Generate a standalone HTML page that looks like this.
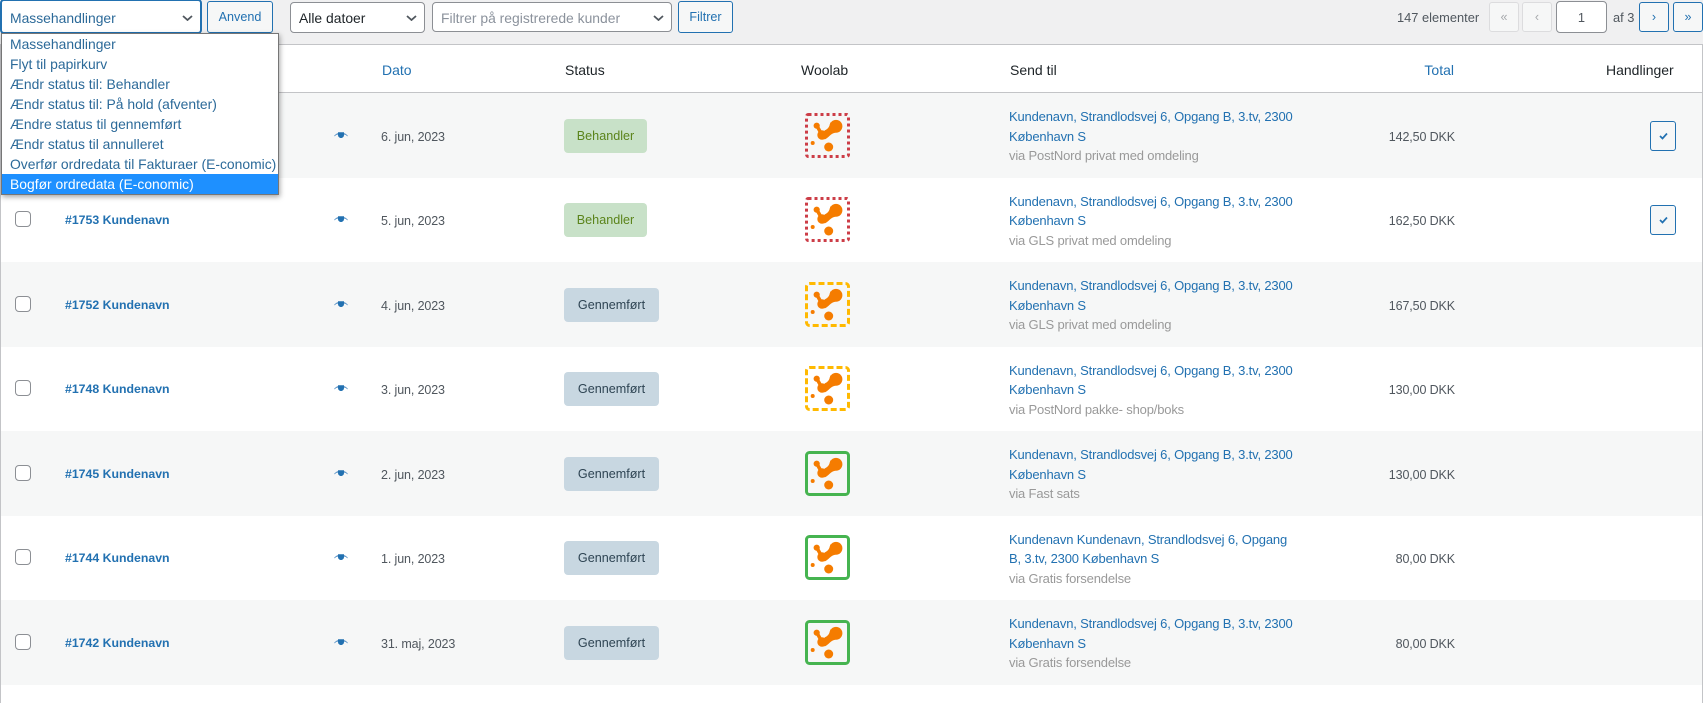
<!DOCTYPE html>
<html><head><meta charset="utf-8"><style>
html,body{margin:0;padding:0;width:1703px;height:703px;overflow:hidden;background:#f0f0f1}
body{position:relative;font-family:"Liberation Sans",sans-serif;font-size:12.5px;letter-spacing:-.12px;color:#50575e}
.t{position:absolute;white-space:nowrap;line-height:20px;height:20px;margin-top:1px}
.b{position:absolute;box-sizing:border-box}
.r{text-align:right}
.l{color:#2271b1}.v{color:#999}
.a{font-size:13px;letter-spacing:-.17px}
.o{color:#2271b1;font-weight:bold;font-size:12.3px;letter-spacing:0}
.h{color:#1d2327}.hd{font-size:14px;letter-spacing:0}
.f{font-size:13.9px;letter-spacing:0}
.n{font-size:12.85px;letter-spacing:0}
.btn{position:absolute;box-sizing:border-box;border:1px solid #2271b1;border-radius:3px;background:#f6f7f7;color:#2271b1;text-align:center;line-height:31px;font-size:12.6px;letter-spacing:0}
.sel{position:absolute;box-sizing:border-box;background:#fff;border:1px solid #8c8f94;border-radius:4px}
.cb{position:absolute;left:15px;width:16px;height:16px;box-sizing:border-box;border:1px solid #8c8f94;border-radius:4px;background:#fff}
.pill{position:absolute;left:564px;height:34px;box-sizing:border-box;border-radius:4px;text-align:center;line-height:34px;font-size:12.6px;letter-spacing:0}
.p1{width:83px;background:#c8e1c8;color:#5b841b}.p2{width:95px;background:#c8d7e1;color:#2e4453}
svg{position:absolute;display:block}
.dd{position:absolute;left:1px;top:33px;width:278px;height:162px;box-sizing:border-box;background:#fff;border:1px solid #767676;box-shadow:1px 2px 5px rgba(0,0,0,.35);z-index:5;font-size:13.9px;letter-spacing:0}
.dd div{position:absolute;left:0;right:0;height:20px;line-height:21px;padding-left:8px;color:#2c6a99;white-space:nowrap}
</style></head><body>
<svg width="0" height="0" style="position:absolute"><defs>
<symbol id="lg" viewBox="0 0 45 45">
<circle cx="31" cy="13.300" r="6.400" fill="#f57c00"/><circle cx="11.700" cy="12.700" r="3.100" fill="#f57c00"/><circle cx="17" cy="22" r="4.700" fill="#f57c00"/>
<circle cx="7.700" cy="30" r="2" fill="#f57c00"/><circle cx="23.700" cy="34" r="4.500" fill="#f57c00"/>
<path d="M25.500 9C24.500 13 24 15.500 19.500 17.500L19.500 26.500C24 24.500 25.500 20.500 30.500 19.600Z" fill="#f57c00"/><path d="M12 13L16.500 21" stroke="#f57c00" stroke-width="3.500"/>
</symbol>
<symbol id="eye" viewBox="0 0 14 6"><path d="M0 4C1.500 2 3 1.200 4.500 1V2.600C3 2.500 1.800 3 .7 4.300ZM14 4C12.500 2 11 1.200 9.500 1V2.600C11 2.500 12.200 3 13.300 4.300Z" fill="#5f96c8"/><path d="M4 .3H10V3C10 4.800 8.600 6 7 6S4 4.800 4 3Z" fill="#2271b1"/></symbol>
<symbol id="chk" viewBox="0 0 9 8"><path d="M1 4L3.500 6.500L8 1.500" fill="none" stroke="#2271b1" stroke-width="1.700"/></symbol>
<symbol id="chv" viewBox="0 0 11 6"><path d="M1 1L5.500 5L10 1" fill="none" stroke="#50575e" stroke-width="1.800"/></symbol>
</defs></svg>

<!-- toolbar -->
<div class="b" style="left:1px;top:0;width:200px;height:33px;background:#fff;border:1px solid #2271b1;box-shadow:0 0 0 1px #2271b1;border-radius:3px"></div>
<div class="t f" style="left:10px;top:7px;color:#2c6a99">Massehandlinger</div>
<svg style="left:182px;top:15px" width="11" height="6"><use href="#chv"/></svg>
<div class="btn" style="left:207px;top:1px;width:66px;height:32px">Anvend</div>
<div class="sel" style="left:290px;top:2px;width:135px;height:31px"></div>
<div class="t h f" style="left:299px;top:7px">Alle datoer</div>
<svg style="left:406px;top:15px" width="11" height="6"><use href="#chv"/></svg>
<div class="sel" style="left:432px;top:2px;width:240px;height:30px"></div>
<div class="t f" style="left:441px;top:7px;color:#8b929c">Filtrer på registrerede kunder</div>
<svg style="left:653px;top:15px" width="11" height="6"><use href="#chv"/></svg>
<div class="btn" style="left:678px;top:1px;width:55px;height:32px">Filtrer</div>
<div class="t n" style="left:1397px;top:7px">147 elementer</div>
<div class="btn" style="left:1489px;top:2px;width:30px;height:30px;line-height:29px;border-color:#dcdcde;color:#a7aaad">«</div>
<div class="btn" style="left:1522px;top:2px;width:30px;height:30px;line-height:29px;border-color:#dcdcde;color:#a7aaad">‹</div>
<div class="sel n" style="left:1556px;top:1px;width:51px;height:32px;text-align:center;line-height:31px">1</div>
<div class="t n" style="left:1613px;top:7px">af 3</div>
<div class="btn" style="left:1639px;top:2px;width:30px;height:30px;line-height:29px">›</div>
<div class="btn" style="left:1673px;top:2px;width:30px;height:30px;line-height:29px">»</div>

<!-- table -->
<div class="b" style="left:0;top:44px;width:1703px;height:659px;background:#fff;border:1px solid #c3c4c7;border-bottom:0"></div>
<div class="b" style="left:1px;top:92px;width:1701px;height:1px;background:#c3c4c7"></div>
<div class="b" style="left:1px;top:93px;width:1701px;height:85px;background:#f6f7f7"></div>
<div class="b" style="left:1px;top:262px;width:1701px;height:85px;background:#f6f7f7"></div>
<div class="b" style="left:1px;top:431px;width:1701px;height:85px;background:#f6f7f7"></div>
<div class="b" style="left:1px;top:600px;width:1701px;height:85px;background:#f6f7f7"></div>

<div class="t l hd" style="left:382px;top:59px">Dato</div>
<div class="t h hd" style="left:565px;top:59px">Status</div>
<div class="t h hd" style="left:801px;top:59px">Woolab</div>
<div class="t h hd" style="left:1010px;top:59px">Send til</div>
<div class="t l r hd" style="left:1355px;width:99px;top:59px">Total</div>
<div class="t h hd" style="left:1606px;top:59px">Handlinger</div>

<!-- row 1 -->
<div class="cb" style="top:127px"></div><div class="t o" style="left:65px;top:125px">#1754 Kundenavn</div>
<svg style="left:334px;top:132px" width="14" height="6"><use href="#eye"/></svg>
<div class="t" style="left:381px;top:126px">6. jun, 2023</div>
<div class="pill p1" style="top:119px">Behandler</div>
<svg style="left:805px;top:113px" width="45" height="45"><use href="#lg"/><rect x="1.500" y="1.500" width="42" height="42" rx="2" fill="none" stroke="#cc3d47" stroke-width="3" stroke-dasharray="3 3"/></svg>
<div class="t l a" style="left:1009px;top:106px">Kundenavn, Strandlodsvej 6, Opgang B, 3.tv, 2300</div>
<div class="t l a" style="left:1009px;top:126px">København S</div>
<div class="t v a" style="left:1009px;top:145px">via PostNord privat med omdeling</div>
<div class="t r" style="left:1355px;width:100px;top:126px">142,50 DKK</div>
<div class="btn" style="left:1650px;top:121px;width:26px;height:30px"></div><svg style="left:1659px;top:132px" width="9" height="8"><use href="#chk"/></svg>

<!-- row 2 -->
<div class="cb" style="top:211px"></div><div class="t o" style="left:65px;top:209px">#1753 Kundenavn</div>
<svg style="left:334px;top:216px" width="14" height="6"><use href="#eye"/></svg>
<div class="t" style="left:381px;top:210px">5. jun, 2023</div>
<div class="pill p1" style="top:203px">Behandler</div>
<svg style="left:805px;top:197px" width="45" height="45"><use href="#lg"/><rect x="1.500" y="1.500" width="42" height="42" rx="2" fill="none" stroke="#cc3d47" stroke-width="3" stroke-dasharray="3 3"/></svg>
<div class="t l a" style="left:1009px;top:191px">Kundenavn, Strandlodsvej 6, Opgang B, 3.tv, 2300</div>
<div class="t l a" style="left:1009px;top:210px">København S</div>
<div class="t v a" style="left:1009px;top:230px">via GLS privat med omdeling</div>
<div class="t r" style="left:1355px;width:100px;top:210px">162,50 DKK</div>
<div class="btn" style="left:1650px;top:205px;width:26px;height:30px"></div><svg style="left:1659px;top:216px" width="9" height="8"><use href="#chk"/></svg>

<!-- row 3 -->
<div class="cb" style="top:296px"></div><div class="t o" style="left:65px;top:294px">#1752 Kundenavn</div>
<svg style="left:334px;top:301px" width="14" height="6"><use href="#eye"/></svg>
<div class="t" style="left:381px;top:295px">4. jun, 2023</div>
<div class="pill p2" style="top:288px">Gennemført</div>
<svg style="left:805px;top:282px" width="45" height="45"><use href="#lg"/><rect x="1.500" y="1.500" width="42" height="42" rx="3" fill="none" stroke="#ffb900" stroke-width="3" stroke-dasharray="6 3"/></svg>
<div class="t l a" style="left:1009px;top:275px">Kundenavn, Strandlodsvej 6, Opgang B, 3.tv, 2300</div>
<div class="t l a" style="left:1009px;top:295px">København S</div>
<div class="t v a" style="left:1009px;top:314px">via GLS privat med omdeling</div>
<div class="t r" style="left:1355px;width:100px;top:295px">167,50 DKK</div>

<!-- row 4 -->
<div class="cb" style="top:380px"></div><div class="t o" style="left:65px;top:378px">#1748 Kundenavn</div>
<svg style="left:334px;top:385px" width="14" height="6"><use href="#eye"/></svg>
<div class="t" style="left:381px;top:379px">3. jun, 2023</div>
<div class="pill p2" style="top:372px">Gennemført</div>
<svg style="left:805px;top:366px" width="45" height="45"><use href="#lg"/><rect x="1.500" y="1.500" width="42" height="42" rx="3" fill="none" stroke="#ffb900" stroke-width="3" stroke-dasharray="6 3"/></svg>
<div class="t l a" style="left:1009px;top:360px">Kundenavn, Strandlodsvej 6, Opgang B, 3.tv, 2300</div>
<div class="t l a" style="left:1009px;top:379px">København S</div>
<div class="t v a" style="left:1009px;top:399px">via PostNord pakke- shop/boks</div>
<div class="t r" style="left:1355px;width:100px;top:379px">130,00 DKK</div>

<!-- row 5 -->
<div class="cb" style="top:465px"></div><div class="t o" style="left:65px;top:463px">#1745 Kundenavn</div>
<svg style="left:334px;top:470px" width="14" height="6"><use href="#eye"/></svg>
<div class="t" style="left:381px;top:464px">2. jun, 2023</div>
<div class="pill p2" style="top:457px">Gennemført</div>
<svg style="left:805px;top:451px" width="45" height="45"><use href="#lg"/><rect x="1.500" y="1.500" width="42" height="42" rx="3" fill="none" stroke="#46b450" stroke-width="3"/></svg>
<div class="t l a" style="left:1009px;top:444px">Kundenavn, Strandlodsvej 6, Opgang B, 3.tv, 2300</div>
<div class="t l a" style="left:1009px;top:464px">København S</div>
<div class="t v a" style="left:1009px;top:483px">via Fast sats</div>
<div class="t r" style="left:1355px;width:100px;top:464px">130,00 DKK</div>

<!-- row 6 -->
<div class="cb" style="top:549px"></div><div class="t o" style="left:65px;top:547px">#1744 Kundenavn</div>
<svg style="left:334px;top:554px" width="14" height="6"><use href="#eye"/></svg>
<div class="t" style="left:381px;top:548px">1. jun, 2023</div>
<div class="pill p2" style="top:541px">Gennemført</div>
<svg style="left:805px;top:535px" width="45" height="45"><use href="#lg"/><rect x="1.500" y="1.500" width="42" height="42" rx="3" fill="none" stroke="#46b450" stroke-width="3"/></svg>
<div class="t l a" style="left:1009px;top:529px">Kundenavn Kundenavn, Strandlodsvej 6, Opgang</div>
<div class="t l a" style="left:1009px;top:548px">B, 3.tv, 2300 København S</div>
<div class="t v a" style="left:1009px;top:568px">via Gratis forsendelse</div>
<div class="t r" style="left:1355px;width:100px;top:548px">80,00 DKK</div>

<!-- row 7 -->
<div class="cb" style="top:634px"></div><div class="t o" style="left:65px;top:632px">#1742 Kundenavn</div>
<svg style="left:334px;top:639px" width="14" height="6"><use href="#eye"/></svg>
<div class="t" style="left:381px;top:633px">31. maj, 2023</div>
<div class="pill p2" style="top:626px">Gennemført</div>
<svg style="left:805px;top:620px" width="45" height="45"><use href="#lg"/><rect x="1.500" y="1.500" width="42" height="42" rx="3" fill="none" stroke="#46b450" stroke-width="3"/></svg>
<div class="t l a" style="left:1009px;top:613px">Kundenavn, Strandlodsvej 6, Opgang B, 3.tv, 2300</div>
<div class="t l a" style="left:1009px;top:633px">København S</div>
<div class="t v a" style="left:1009px;top:652px">via Gratis forsendelse</div>
<div class="t r" style="left:1355px;width:100px;top:633px">80,00 DKK</div>

<!-- dropdown -->
<div class="dd">
<div style="top:0">Massehandlinger</div>
<div style="top:20px">Flyt til papirkurv</div>
<div style="top:40px">Ændr status til: Behandler</div>
<div style="top:60px">Ændr status til: På hold (afventer)</div>
<div style="top:80px">Ændre status til gennemført</div>
<div style="top:100px">Ændr status til annulleret</div>
<div style="top:120px">Overfør ordredata til Fakturaer (E-conomic)</div>
<div style="top:140px;background:#1e90ff;color:#fff">Bogfør ordredata (E-conomic)</div>
</div>
</body></html>
